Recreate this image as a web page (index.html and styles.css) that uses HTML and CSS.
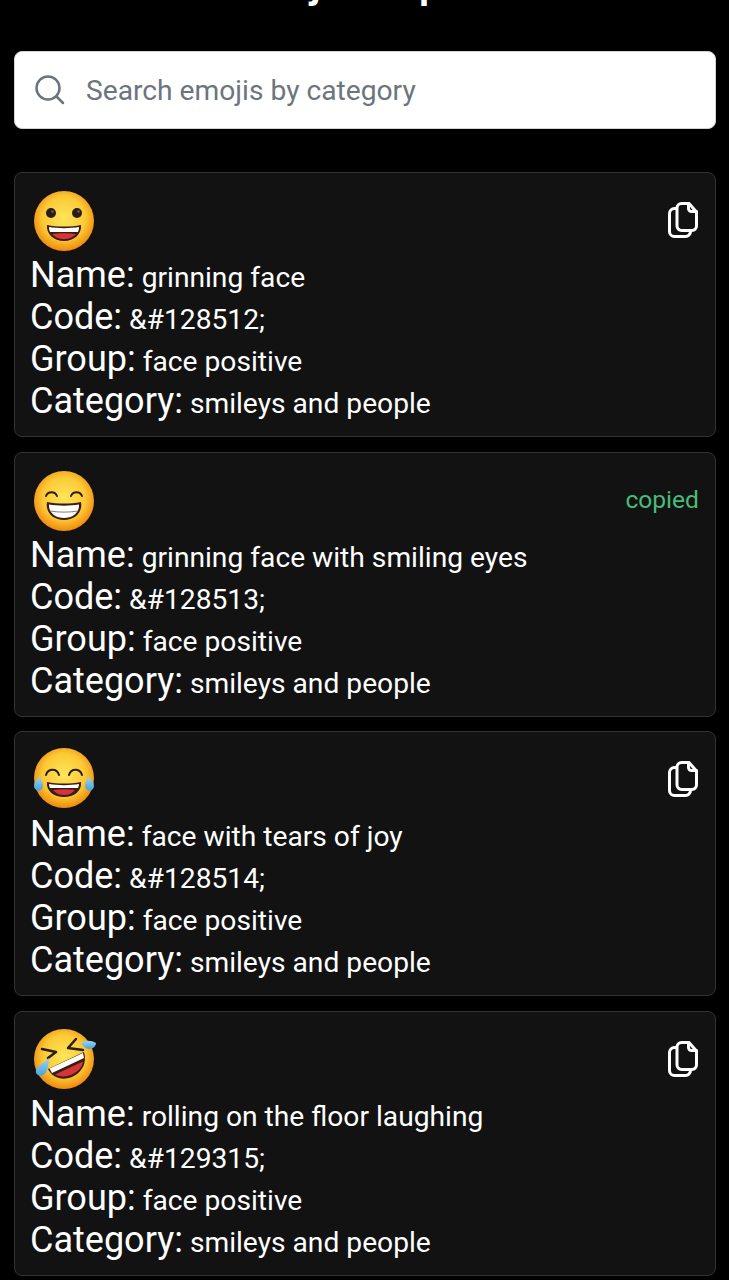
FILE: index.html
```html
<!DOCTYPE html>
<html lang="en">
<head>
    <meta charset="UTF-8">
    <meta name="viewport" content="width=device-width, initial-scale=1.0">
    <title>Emoji Compiler</title>
    <link rel="stylesheet" href="styles.css">
</head>
<body>
    <svg class="sprites" width="0" height="0" aria-hidden="true">
        <defs>
            <radialGradient id="faceFill" cx="50%" cy="45%" r="55%">
                <stop offset="0%" stop-color="#fde65a"/>
                <stop offset="65%" stop-color="#fcc935"/>
                <stop offset="100%" stop-color="#f0890f"/>
            </radialGradient>
            <linearGradient id="tearFill" x1="0" y1="0" x2="0" y2="1">
                <stop offset="0%" stop-color="#9ad6f2"/>
                <stop offset="100%" stop-color="#4aa3dd"/>
            </linearGradient>
            <symbol id="copyIcon" viewBox="0 0 32 38">
                <g fill="none" stroke="#fff" stroke-width="3" stroke-linejoin="round" stroke-linecap="round">
                    <path d="M14.500 2.500h7.500l7.500 8.500v14a4.500 4.500 0 0 1-4.500 4.500h-10.500a4.500 4.500 0 0 1-4.500-4.500v-18a4.500 4.500 0 0 1 4.500-4.500z"/>
                    <path d="M21.500 2.500v5a3 3 0 0 0 3 3h5"/>
                    <path d="M9.500 7.500h-2a5 5 0 0 0-5 5v18a5 5 0 0 0 5 5h11a5 5 0 0 0 5-5v-1"/>
                </g>
            </symbol>
        </defs>
    </svg>

    <h1 class="title">Emoji Compiler</h1>

    <div class="search">
        <svg class="search-icon" viewBox="0 0 30 30">
            <circle cx="13" cy="13" r="11.500" fill="none" stroke="#6c757d" stroke-width="2.500"/>
            <path d="M21.500 21.500l6.500 6.500" fill="none" stroke="#6c757d" stroke-width="2.500" stroke-linecap="round"/>
        </svg>
        <input class="search-input" type="text" placeholder="Search emojis by category">
    </div>

    <div class="card">
        <div class="card-top">
            <svg class="emoji" viewBox="0 0 64 64">
                <circle cx="32" cy="32" r="30" fill="url(#faceFill)"/>
                <circle cx="19" cy="24" r="5" fill="#2b1c14"/>
                <circle cx="45" cy="24" r="5" fill="#2b1c14"/>
                <circle cx="20.500" cy="22.500" r="1.300" fill="#6b5a50"/>
                <circle cx="46.500" cy="22.500" r="1.300" fill="#6b5a50"/>
                <path d="M15 36c10 2 24 2 34 0c1 9-7 16-17 16s-18-7-17-16z" fill="#3a1d12"/>
                <path d="M17 38c9 1.500 21 1.500 30 0c0 2-.5 4-1 5h-28c-.5-1-1-3-1-5z" fill="#fff"/>
                <path d="M20 45c7-1 17-1 24 0c-2.500 3-7 5-12 5s-9.500-2-12-5z" fill="#d8323a"/>
            </svg>
            <svg class="copy-icon"><use href="#copyIcon"/></svg>
        </div>
        <div class="row"><span class="label">Name:</span> grinning face</div>
        <div class="row"><span class="label">Code:</span> &amp;#128512;</div>
        <div class="row"><span class="label">Group:</span> face positive</div>
        <div class="row"><span class="label">Category:</span> smileys and people</div>
    </div>

    <div class="card">
        <div class="card-top">
            <svg class="emoji" viewBox="0 0 64 64">
                <circle cx="32" cy="32" r="30" fill="url(#faceFill)"/>
                <path d="M14 27c2-5 9-5 11 0M39 27c2-5 9-5 11 0" fill="none" stroke="#2b1c14" stroke-width="2" stroke-linecap="round"/>
                <path d="M15 33c10 2 24 2 34 0c2 10-6 18-17 18s-19-8-17-18z" fill="#3a1d12"/>
                <path d="M17 35.500c9 1.500 21 1.500 30 0c.5 8-6 13.500-15 13.500s-15.500-5.500-15-13.500z" fill="#fff"/>
                <path d="M18 42c9 1.500 19 1.500 28 0" fill="none" stroke="#8a7a70" stroke-width="1"/>
            </svg>
            <span class="copied">copied</span>
        </div>
        <div class="row"><span class="label">Name:</span> grinning face with smiling eyes</div>
        <div class="row"><span class="label">Code:</span> &amp;#128513;</div>
        <div class="row"><span class="label">Group:</span> face positive</div>
        <div class="row"><span class="label">Category:</span> smileys and people</div>
    </div>

    <div class="card">
        <div class="card-top">
            <svg class="emoji" viewBox="0 0 64 64">
                <circle cx="32" cy="30" r="30" fill="url(#faceFill)"/>
                <path d="M14 27c2-7 11-7 13 0M37 27c2-7 11-7 13 0" fill="none" stroke="#2b1c14" stroke-width="2" stroke-linecap="round"/>
                <path d="M15 34c10 2 24 2 34 0c1 9-7 15-17 15s-18-6-17-15z" fill="#3a1d12"/>
                <path d="M17 36c9 1.500 21 1.500 30 0c0 1.500-.5 3-1 4h-28c-.5-1-1-2.500-1-4z" fill="#fff"/>
                <path d="M21 42c7-1 15-1 22 0c-2.500 3-6 5-11 5s-8.500-2-11-5z" fill="#d8323a"/>
                <path d="M7 28c1 3 4 6 4 10a4.500 4.500 0 0 1-9 0c0-4 4-7 5-10z" fill="url(#tearFill)"/>
                <path d="M57 28c-1 3-4 6-4 10a4.500 4.500 0 0 0 9 0c0-4-4-7-5-10z" fill="url(#tearFill)"/>
            </svg>
            <svg class="copy-icon"><use href="#copyIcon"/></svg>
        </div>
        <div class="row"><span class="label">Name:</span> face with tears of joy</div>
        <div class="row"><span class="label">Code:</span> &amp;#128514;</div>
        <div class="row"><span class="label">Group:</span> face positive</div>
        <div class="row"><span class="label">Category:</span> smileys and people</div>
    </div>

    <div class="card">
        <div class="card-top">
            <svg class="emoji" viewBox="0 0 64 64">
                <circle cx="32" cy="31" r="30" fill="url(#faceFill)"/>
                <path d="M10 21l14 3l-8 6M44 11l-8 9l15 2" fill="none" stroke="#2b1c14" stroke-width="2.500" stroke-linejoin="round" stroke-linecap="round"/>
                <path d="M16 41l36-17c3 10-1 19-10 24c-10 5-21 3-26-7z" fill="#3a1d12"/>
                <path d="M17.500 40.500l33.500-15.500l1 5l-32 15z" fill="#fff"/>
                <path d="M23 46.500l28-13c-1 6-5 10-11 13c-6 2.500-12 2.500-17 0z" fill="#d8323a"/>
                <path d="M49 15c4-3 10-3 15 0c0 3-3 6-7 6c-3 0-6-3-8-6z" fill="url(#tearFill)"/>
                <path d="M17 30c-3 4-11 7-13 12c-1 4 3 7 7 5c4-2 6-9 6-17z" fill="url(#tearFill)"/>
            </svg>
            <svg class="copy-icon"><use href="#copyIcon"/></svg>
        </div>
        <div class="row"><span class="label">Name:</span> rolling on the floor laughing</div>
        <div class="row"><span class="label">Code:</span> &amp;#129315;</div>
        <div class="row"><span class="label">Group:</span> face positive</div>
        <div class="row"><span class="label">Category:</span> smileys and people</div>
    </div>
</body>
</html>
```

FILE: styles.css
```css
html {
    background-color: #000;
}
body {
    margin: 0;
    padding: 0 13px 0 14px;
    height: 1280px;
    overflow: hidden;
    background-color: #000;
    color: #fff;
    font-family: Roboto, Arial, sans-serif;
}
.sprites {
    position: absolute;
}
.title {
    margin: -38px 0 0;
    height: 89px;
    line-height: 46px;
    font-size: 38px;
    font-weight: 700;
    text-align: center;
}
.search {
    display: flex;
    align-items: center;
    gap: 21px;
    height: 78px;
    box-sizing: border-box;
    margin-bottom: 43px;
    padding: 0 20px;
    background-color: #fff;
    border: 1px solid #ced4da;
    border-radius: 8px;
}
.search-icon {
    width: 30px;
    height: 30px;
    flex: none;
}
.search-input {
    flex: 1;
    min-width: 0;
    padding: 0;
    border: none;
    outline: none;
    font-family: inherit;
    font-size: 28.200px;
    background: transparent;
}
.search-input::placeholder {
    color: #6c757d;
    opacity: 1;
}
.card {
    box-sizing: border-box;
    height: 265px;
    margin-bottom: 14.500px;
    padding: 16px 16px 0 15px;
    background-color: #121212;
    border: 1px solid #333;
    border-radius: 8px;
}
.card-top {
    display: flex;
    justify-content: space-between;
    align-items: flex-start;
    height: 65px;
}
.emoji {
    width: 64px;
    height: 64px;
    display: block;
    margin-left: 2px;
}
.copy-icon {
    width: 32px;
    height: 38px;
    margin-top: 12px;
}
.copied {
    margin-top: 16px;
    font-size: 24.600px;
    line-height: 30px;
    color: #48bb78;
}
.row {
    height: 42px;
    line-height: 42px;
    font-size: 28.200px;
    white-space: nowrap;
}
.label {
    font-size: 36px;
}
```
